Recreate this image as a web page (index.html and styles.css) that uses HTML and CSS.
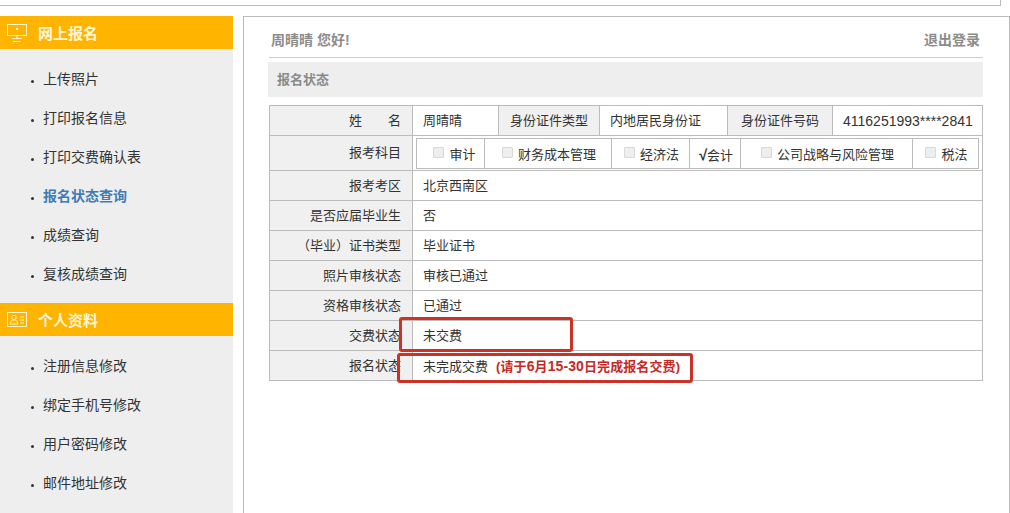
FILE: index.html
```html
<!DOCTYPE html>
<html lang="zh">
<head>
<meta charset="utf-8">
<title>报名状态</title>
<link rel="stylesheet" href="styles.css">
</head>
<body>
<div class="topbar"></div>
<div class="layout">
  <aside class="sidebar">
    <div class="side-head">
      <svg class="side-icon" width="20" height="18" viewBox="0 0 20 18" fill="none" stroke="#fff3c8" stroke-width="1">
        <rect x="0.5" y="0.5" width="19" height="11"/>
        <path d="M10 12v3M5 14.500h10M6 17.500h8"/>
        <path d="M9 4h2v2h-2z" fill="#fff3c8" stroke="none"/>
      </svg>
      <span>网上报名</span>
    </div>
    <ul class="side-list">
      <li>上传照片</li>
      <li>打印报名信息</li>
      <li>打印交费确认表</li>
      <li class="active">报名状态查询</li>
      <li>成绩查询</li>
      <li>复核成绩查询</li>
    </ul>
    <div class="side-head">
      <svg class="side-icon" width="20" height="15" viewBox="0 0 20 15" fill="none" stroke="#fff3c8" stroke-width="1">
        <rect x="0.5" y="0.5" width="19" height="14"/>
        <circle cx="7" cy="5.500" r="2.200"/>
        <path d="M3 12c.5-3 2-4 4-4s3.500 1 4 4zM13 5h4M13 8h4M13 11h4"/>
      </svg>
      <span>个人资料</span>
    </div>
    <ul class="side-list">
      <li>注册信息修改</li>
      <li>绑定手机号修改</li>
      <li>用户密码修改</li>
      <li>邮件地址修改</li>
    </ul>
  </aside>
  <main class="panel">
    <div class="greet">
      <span>周晴晴 您好!</span>
      <span>退出登录</span>
    </div>
    <div class="status-title">报名状态</div>
    <div class="table-wrap">
      <table class="info">
        <colgroup>
          <col class="c1"><col class="c2"><col class="c3"><col class="c4"><col class="c5"><col class="c6">
        </colgroup>
        <tr>
          <th class="spaced">姓<span class="name-gap"></span>名</th>
          <td>周晴晴</td>
          <th class="center">身份证件类型</th>
          <td>内地居民身份证</td>
          <th class="center">身份证件号码</th>
          <td class="idno">4116251993****2841</td>
        </tr>
        <tr class="subject-row">
          <th>报考科目</th>
          <td colspan="5" class="subject-cell">
            <table class="subjects">
              <colgroup>
                <col class="s1"><col class="s2"><col class="s3"><col class="s4"><col class="s5"><col class="s6">
              </colgroup>
              <tr>
                <td class="first"><i class="cb"></i>审计</td>
                <td class="nudge"><i class="cb"></i>财务成本管理</td>
                <td class="nudge"><i class="cb"></i>经济法</td>
                <td class="nudge"><b class="tick">√</b>会计</td>
                <td class="nudge"><i class="cb"></i>公司战略与风险管理</td>
                <td class="nudge"><i class="cb"></i>税法</td>
              </tr>
            </table>
          </td>
        </tr>
        <tr><th>报考考区</th><td colspan="5">北京西南区</td></tr>
        <tr><th>是否应届毕业生</th><td colspan="5">否</td></tr>
        <tr><th>（毕业）证书类型</th><td colspan="5">毕业证书</td></tr>
        <tr><th>照片审核状态</th><td colspan="5">审核已通过</td></tr>
        <tr><th>资格审核状态</th><td colspan="5">已通过</td></tr>
        <tr><th>交费状态</th><td colspan="5">未交费</td></tr>
        <tr><th>报名状态</th><td colspan="5">未完成交费<strong class="notice">(请于<span class="num">6</span>月<span class="num">15-30</span>日完成报名交费)</strong></td></tr>
      </table>
      <div class="mark mark-a"></div>
      <div class="mark mark-b"></div>
    </div>
  </main>
</div>
</body>
</html>
```

FILE: styles.css
```css
* { box-sizing: border-box; }
html, body { margin: 0; height: 513px; overflow: hidden; background: #fff; }
body { font-family: "Liberation Sans", "Noto Sans CJK SC", sans-serif; font-size: 13px; color: #333; }

.topbar { height: 6px; width: 1001px; border: 1px solid #bbb; border-top: 0; border-left: 0; }

.layout { display: flex; gap: 10px; margin-top: 10px; }

.sidebar { flex: 0 0 233px; height: 510px; background: #eee; }
.side-head { height: 33px; background: #ffb400; display: flex; align-items: center; padding-left: 7px; color: #fff6d6; font-size: 15px; font-weight: 700; gap: 11px; }
.side-icon { flex: none; }
.side-list { list-style: none; margin: 0; padding: 11px 0 9px 0; }
.side-list li { height: 39px; line-height: 39px; padding-left: 43px; font-size: 14px; color: #333; position: relative; }
.side-list li::before { content: ""; position: absolute; left: 31px; top: 20px; width: 3px; height: 3px; border-radius: 50%; background: #333; }
.side-list li.active { color: #3f7cb5; font-weight: 700; }

.panel { width: 767px; height: 510px; border: 1px solid #bbb; padding: 0 26px 0 25px; }
.greet { height: 41px; padding: 14px 3px 0 2px; border-bottom: 1px solid #ccc; display: flex; justify-content: space-between; font-size: 14px; line-height: 18px; font-weight: 700; color: #8c8c8c; }
.status-title { height: 35px; margin-top: 4px; margin-left: -1px; background: #eee; line-height: 35px; padding-left: 9px; font-size: 13px; font-weight: 700; color: #8a8a8a; }

.table-wrap { position: relative; margin-top: 8px; width: 714px; }
.info { border-collapse: collapse; table-layout: fixed; width: 713px; }
.c1 { width: 143px; } .c2 { width: 86px; } .c3 { width: 101px; }
.c4 { width: 128px; } .c5 { width: 105px; } .c6 { width: 150px; }
.info th, .info td { border: 1px solid #bbb; height: 30px; padding: 0; font-size: 13px; line-height: 18px; font-weight: 400; color: #333; }
.info > tbody > tr > th { background: #f0f0f0; text-align: right; padding-right: 11px; }
.info > tbody > tr > th.center { text-align: center; padding: 0; }
.info > tbody > tr > td { padding: 1px 0 0 10px; background: #fff; }
.info > tbody > tr > td.idno { font-size: 14px; white-space: nowrap; }
.name-gap { display: inline-block; width: 26px; }
.info > tbody > tr.subject-row > th { height: 35px; }
.info > tbody > tr > td.subject-cell { padding: 2px 3px 1px 3px; }

.subjects { border-collapse: collapse; table-layout: fixed; width: 562px; }
.s1 { width: 68px; } .s2 { width: 127px; } .s3 { width: 78px; }
.s4 { width: 51px; } .s5 { width: 172px; } .s6 { width: 66px; }
.subjects td { border: 1px solid #bbb; height: 30px; text-align: center; padding: 3px 0 0; white-space: nowrap; }
.subjects td.first { padding-left: 8px; }
.subjects td.nudge { padding-left: 2px; }
.cb { display: inline-block; width: 11px; height: 11px; margin-right: 5px; border: 1px solid #d8d8d8; border-radius: 1px; background: #eeeeee; vertical-align: 1px; }
.tick { font-weight: 700; font-size: 15px; }
.notice { color: #c8281e; font-weight: 700; margin-left: 8px; letter-spacing: .1px; }
.num { font-size: 14px; }

.mark { position: absolute; border: 3px solid #cc3328; border-radius: 3px; }
.mark-a { left: 130px; top: 212px; width: 174px; height: 35px; }
.mark-b { left: 128px; top: 248px; width: 296px; height: 30px; }
```
